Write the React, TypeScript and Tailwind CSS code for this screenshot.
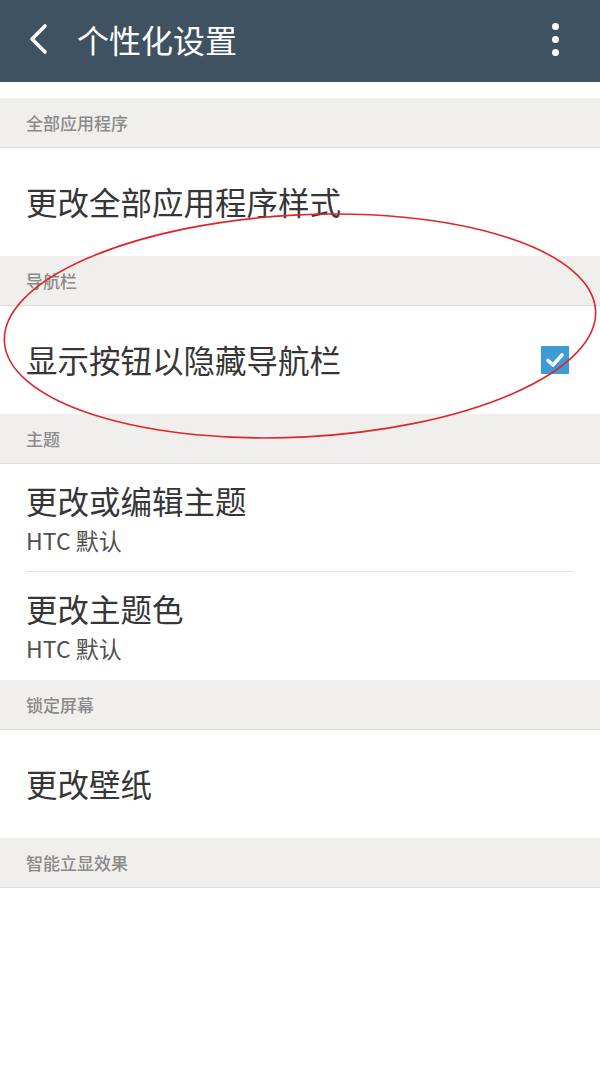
import React from "react";

const font = "font-['Noto_Sans_CJK_SC','Noto_Sans',sans-serif]";

function SectionHeader({ label }: { label: string }) {
  return (
    <div className="h-[50px] bg-[#f0efed] border-b border-[#dddcda] flex items-center pl-[26px] text-[17px] leading-none text-[#8a8a8a] font-medium">
      {label}
    </div>
  );
}

function Item({ title, sub, check, divider }: { title: string; sub?: string; check?: boolean; divider?: boolean }) {
  return (
    <div className="h-[108px] relative flex items-center px-[26px]">
      <div className="flex-1 flex flex-col">
        <div className="text-[31.5px] leading-[1.45] text-[#363636]">{title}</div>
        {sub && <div className="text-[23px] leading-[1.45] text-[#505050]">{sub}</div>}
      </div>
      {check && (
        <div className="w-[28px] h-[28px] bg-[#3d9bd8] flex items-center justify-center mr-[5px]">
          <svg width="22" height="22" viewBox="0 0 22 22">
            <path d="M4 11.5 L9 16 L18 6" fill="none" stroke="white" strokeWidth="3.6" strokeLinecap="round" strokeLinejoin="round" />
          </svg>
        </div>
      )}
      {divider && <div className="absolute left-[26px] right-[27px] bottom-0 h-px bg-[#e2e2e2]" />}
    </div>
  );
}

export default function App() {
  return (
    <div className={`w-[600px] h-[1066px] bg-white relative overflow-hidden ${font}`}>
      <div className="h-[82px] bg-[#3f5261] flex items-center pl-[26px] pr-[41px] pb-[5px]">
        <svg width="24" height="32" viewBox="0 0 24 32" className="mr-[27px] mt-[1px]">
          <path d="M19 3 L6 16 L19 29" fill="none" stroke="white" strokeWidth="3.6" strokeLinecap="round" strokeLinejoin="round" />
        </svg>
        <div className="flex-1 text-white text-[32px] leading-none">个性化设置</div>
        <div className="flex flex-col items-center gap-[6px] mt-[2px]">
          <div className="w-[7px] h-[7px] rounded-full bg-white" />
          <div className="w-[7px] h-[7px] rounded-full bg-white" />
          <div className="w-[7px] h-[7px] rounded-full bg-white" />
        </div>
      </div>
      <div className="h-[16px]" />
      <SectionHeader label="全部应用程序" />
      <Item title="更改全部应用程序样式" />
      <SectionHeader label="导航栏" />
      <Item title="显示按钮以隐藏导航栏" check />
      <SectionHeader label="主题" />
      <Item title="更改或编辑主题" sub="HTC 默认" divider />
      <Item title="更改主题色" sub="HTC 默认" />
      <SectionHeader label="锁定屏幕" />
      <Item title="更改壁纸" />
      <SectionHeader label="智能立显效果" />

      <svg className="absolute inset-0 pointer-events-none" width="600" height="1066">
        <ellipse cx="300" cy="326" rx="296" ry="111" fill="none" stroke="#e0262a" strokeWidth="1.6" transform="rotate(-3 300 326)" />
      </svg>
    </div>
  );
}
